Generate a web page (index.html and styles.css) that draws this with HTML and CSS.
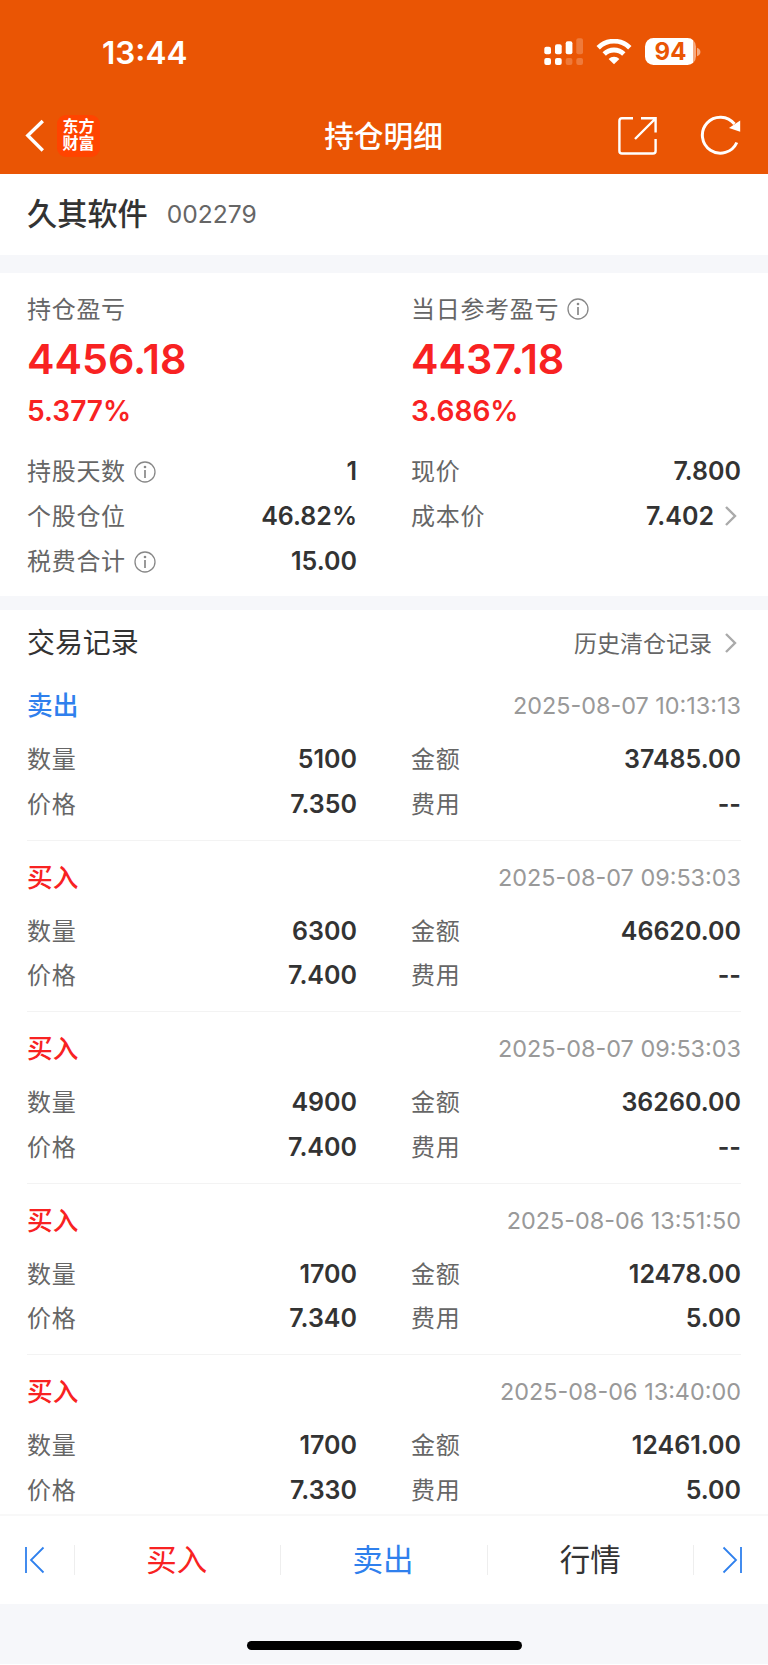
FILE: index.html
```html
<!DOCTYPE html>
<html lang="zh-CN">
<head>
    <meta charset="UTF-8">
    <meta name="viewport" content="width=device-width, initial-scale=1.0">
    <title>持仓明细</title>
    <link rel="stylesheet" href="styles.css">
</head>
<body>
    <header class="header">
        <div class="status-bar">
            <span class="time">13:44</span>
            <div class="status-icons">
                <svg class="signal" width="40" height="28" viewBox="0 0 40 28" fill="#fff">
                    <rect x="0.3" y="8.7" width="6.7" height="7.6" rx="2"/>
                    <rect x="11" y="6.3" width="6.7" height="10" rx="2"/>
                    <rect x="21.7" y="3.3" width="6.7" height="13" rx="2"/>
                    <rect x="32.3" y="0.3" width="6.7" height="16" rx="2" opacity=".22"/>
                    <rect x="0.3" y="20" width="6.7" height="7" rx="2"/>
                    <rect x="11" y="20" width="6.7" height="7" rx="2"/>
                    <rect x="21.7" y="20" width="6.7" height="7" rx="2" opacity=".22"/>
                    <rect x="32.3" y="20" width="6.7" height="7" rx="2" opacity=".22"/>
                </svg>
                <svg class="wifi" width="36" height="26" viewBox="0 0 36 26" fill="none" stroke="#fff" stroke-width="4.8">
                    <path d="M2.2 8.7a22.4 22.4 0 0 1 31.6 0"/>
                    <path d="M8.2 15a14 14 0 0 1 19.6 0"/>
                    <path d="M18 25.3l-5.4-5.3a7.8 7.8 0 0 1 10.8 0z" fill="#fff" stroke="none"/>
                </svg>
                <div class="battery"><span class="battery-level">94</span></div>
                <svg class="battery-cap" width="4" height="10" viewBox="0 0 4 10"><path d="M0 0.8c4.6 1.6 4.6 6.8 0 8.4z" fill="#fff" opacity=".5"/></svg>
            </div>
        </div>
        <nav class="nav-bar">
            <div class="nav-left">
                <svg width="20" height="34" viewBox="0 0 20 34" fill="none" stroke="#fff" stroke-width="3.4"><path d="M17.8 2L2.8 16.5l15 15"/></svg>
                <div class="app-logo"><span>东方</span><span>财富</span></div>
            </div>
            <h1 class="nav-title">持仓明细</h1>
            <div class="nav-right">
                <svg width="40" height="40" viewBox="0 0 40 40" fill="none" stroke="#fff" stroke-width="2.4">
                    <path d="M16 2.3H5a2.6 2.6 0 0 0-2.6 2.6v30A2.6 2.6 0 0 0 5 37.5h31a2.6 2.6 0 0 0 2.6-2.6V23"/>
                    <path d="M24 2.3h14.6v14.2M38 3L18 23"/>
                </svg>
                <svg width="42" height="42" viewBox="0 0 42 42" fill="none" stroke="#fff" stroke-width="3">
                    <path d="M36.8 27.5A18 18 0 1 1 34.5 9"/>
                    <path d="M40.2 5.5v11.3L29 13z" fill="#fff" stroke="none"/>
                </svg>
            </div>
        </nav>
    </header>

    <section class="stock">
        <h2 class="stock-name">久其软件</h2>
        <span class="stock-code">002279</span>
    </section>

    <section class="summary">
        <div class="summary-col">
            <div class="profit-label"><span class="label">持仓盈亏</span></div>
            <div class="profit-value">4456.18</div>
            <div class="profit-rate">5.377%</div>
            <div class="row"><span class="label">持股天数</span><svg class="info" viewBox="0 0 22 22"><use href="#info"/></svg><b class="value">1</b></div>
            <div class="row"><span class="label">个股仓位</span><b class="value">46.82%</b></div>
            <div class="row"><span class="label">税费合计</span><svg class="info" viewBox="0 0 22 22"><use href="#info"/></svg><b class="value">15.00</b></div>
        </div>
        <div class="summary-col">
            <div class="profit-label"><span class="label">当日参考盈亏</span><svg class="info" viewBox="0 0 22 22"><use href="#info"/></svg></div>
            <div class="profit-value">4437.18</div>
            <div class="profit-rate">3.686%</div>
            <div class="row"><span class="label">现价</span><b class="value">7.800</b></div>
            <div class="row"><span class="label">成本价</span><b class="value">7.402</b><svg class="arrow" viewBox="0 0 12 20"><path d="M1 1l9 9-9 9"/></svg></div>
        </div>
    </section>

    <main class="records">
        <div class="records-head">
            <h3 class="records-title">交易记录</h3>
            <a class="history"><span>历史清仓记录</span><svg class="arrow" viewBox="0 0 12 20"><path d="M1 1l9 9-9 9"/></svg></a>
        </div>
        <div id="tradeList"></div>
    </main>

    <footer class="toolbar">
        <div class="tool-side"><svg width="20" height="28" viewBox="0 0 20 28"><path d="M1 1v26M18.5 1.5L6 14l12.5 12.5"/></svg></div>
        <div class="tool buy"><span>买入</span></div>
        <div class="tool sell"><span>卖出</span></div>
        <div class="tool"><span>行情</span></div>
        <div class="tool-side"><svg width="20" height="28" viewBox="0 0 20 28"><path d="M19 1v26M1.5 1.5L14 14 1.5 26.5"/></svg></div>
    </footer>
    <div class="home-area"><div class="home-bar"></div></div>

    <svg width="0" height="0" class="defs">
        <symbol id="info" viewBox="0 0 22 22">
            <circle cx="11" cy="11" r="10" fill="none" stroke="#888" stroke-width="1.3"/>
            <circle cx="11" cy="6" r="1.3" fill="#888"/>
            <path d="M11 9v8" stroke="#888" stroke-width="1.7"/>
        </symbol>
    </svg>

    <script>
        const trades = [
            { type: 'sell', time: '2025-08-07 10:13:13', count: '5100', price: '7.350', amount: '37485.00', fee: '--' },
            { type: 'buy', time: '2025-08-07 09:53:03', count: '6300', price: '7.400', amount: '46620.00', fee: '--' },
            { type: 'buy', time: '2025-08-07 09:53:03', count: '4900', price: '7.400', amount: '36260.00', fee: '--' },
            { type: 'buy', time: '2025-08-06 13:51:50', count: '1700', price: '7.340', amount: '12478.00', fee: '5.00' },
            { type: 'buy', time: '2025-08-06 13:40:00', count: '1700', price: '7.330', amount: '12461.00', fee: '5.00' }
        ];

        function row(label, value) {
            return `<div class="row"><span class="label">${label}</span><b class="value">${value}</b></div>`;
        }

        document.getElementById('tradeList').innerHTML = trades.map(t => `
            <article class="trade">
                <div class="trade-head">
                    <span class="trade-type ${t.type}">${t.type === 'buy' ? '买入' : '卖出'}</span>
                    <span class="trade-time">${t.time}</span>
                </div>
                <div class="trade-grid">
                    ${row('数量', t.count)}${row('金额', t.amount)}
                    ${row('价格', t.price)}${row('费用', t.fee)}
                </div>
            </article>`).join('');
    </script>
</body>
</html>
```

FILE: styles.css
```css
:root {
    --orange: #EA5504;
    --red: #F82222;
    --blue: #2F80ED;
    --text: #333;
    --text-label: #666;
    --text-light: #999;
    --bg-gray: #F6F7FA;
}

* {
    margin: 0;
    padding: 0;
    box-sizing: border-box;
}

body {
    font-family: Inter, 'Noto Sans CJK SC', sans-serif;
    width: 768px;
    height: 1665px;
    display: flex;
    flex-direction: column;
    background: #fff;
    color: var(--text);
    overflow: hidden;
}

.header {
    flex: none;
    height: 174px;
    background: var(--orange);
    color: #fff;
}

.status-bar {
    display: flex;
    justify-content: space-between;
    height: 98px;
    padding: 0 67px 0 102px;
}

.time {
    font-size: 31.5px;
    font-weight: 600;
    line-height: 105px;
}

.status-icons {
    display: flex;
    align-items: center;
    height: 103px;
}

.wifi {
    margin-left: 12px;
}

.battery {
    width: 51px;
    height: 27px;
    margin-left: 13px;
    border-radius: 8.5px;
    background: linear-gradient(90deg, #fff 48px, rgba(255, 255, 255, .5) 48px);
}

.battery-level {
    display: block;
    width: 51px;
    font-size: 24px;
    font-weight: 700;
    line-height: 28px;
    text-align: center;
    color: var(--orange);
}

.battery-cap {
    margin-left: 1px;
}

.nav-bar {
    display: grid;
    grid-template-columns: 1fr auto 1fr;
    align-items: center;
    height: 76px;
    padding: 0 26px 0 25px;
}

.nav-left, .nav-right {
    display: flex;
    align-items: center;
}

.nav-left {
    gap: 12px;
}

.nav-right {
    justify-content: flex-end;
    gap: 43px;
}

.app-logo {
    display: flex;
    flex-direction: column;
    justify-content: center;
    width: 43px;
    height: 42px;
    padding-bottom: 2px;
    border-radius: 9px;
    background: #FF4400;
    font-size: 16px;
    font-weight: 700;
    line-height: 17.5px;
    text-align: center;
}

.nav-title {
    padding-bottom: 4px;
    font-size: 29.7px;
    font-weight: 500;
}

.stock {
    flex: none;
    display: flex;
    align-items: center;
    height: 81px;
    padding: 0 27px 4px;
}

.stock-name {
    padding-bottom: 2px;
    font-size: 30.2px;
    font-weight: 500;
}

.stock-code {
    margin-left: 19px;
    padding-top: 2px;
    font-size: 24.6px;
    color: var(--text-label);
}

.summary {
    flex: none;
    display: grid;
    grid-template-columns: 1fr 1fr;
    column-gap: 54px;
    height: 355px;
    padding: 18px 27px 0;
    border-top: 18px solid var(--bg-gray);
    border-bottom: 14px solid var(--bg-gray);
}

.profit-label {
    display: flex;
    align-items: center;
    height: 36px;
}

.profit-value {
    font-size: 41.3px;
    font-weight: 600;
    line-height: 64px;
    color: var(--red);
}

.profit-rate {
    margin-bottom: 18px;
    font-size: 28.1px;
    font-weight: 600;
    line-height: 40px;
    color: var(--red);
}

.row {
    display: flex;
    align-items: center;
    height: 44.7px;
}

.label {
    padding-bottom: 3px;
    font-size: 24px;
    letter-spacing: .7px;
    color: var(--text-label);
}

.value {
    margin-left: auto;
    font-size: 25px;
    font-weight: 600;
}

.info {
    width: 22px;
    height: 22px;
    margin-left: 8px;
}

.row .info {
    margin-top: 2px;
}

.arrow {
    width: 12px;
    height: 20px;
    margin: 0 4px 0 11px;
    fill: none;
    stroke: #aaa;
    stroke-width: 2.4;
}

.records {
    flex: none;
    height: 904px;
    padding: 0 27px;
    overflow: hidden;
}

.records-head {
    display: flex;
    justify-content: space-between;
    align-items: center;
    height: 59px;
    padding-top: 7px;
}

.records-title {
    padding-bottom: 4px;
    font-size: 27.9px;
    font-weight: 400;
}

.history {
    display: flex;
    align-items: center;
    font-size: 23px;
    color: var(--text-label);
}

.history span {
    padding: 0 2px 3px 0;
}

.trade {
    height: 171.5px;
    padding-top: 8px;
    border-bottom: 1px solid #f3f3f3;
}

.trade-head {
    display: flex;
    justify-content: space-between;
    align-items: center;
    height: 57px;
    margin-bottom: 2.7px;
}

.trade-type {
    padding-bottom: 4px;
    font-size: 25.7px;
    font-weight: 500;
}

.trade-time {
    font-size: 23.4px;
    color: var(--text-light);
}

.trade-grid {
    display: grid;
    grid-template-columns: 1fr 1fr;
    column-gap: 54px;
}

.toolbar {
    flex: none;
    display: flex;
    align-items: center;
    height: 90px;
    border-top: 2px solid #f8f8f8;
}

.tool, .tool-side {
    display: flex;
    align-items: center;
    justify-content: center;
    height: 30px;
}

.tool {
    flex: 1;
    font-size: 30.5px;
    border-right: 1px solid #eee;
}

.tool span {
    padding: 0 2px 5px 0;
}

.tool:nth-child(4) span {
    padding-right: 0;
}

.tool-side {
    width: 74px;
    padding-left: 2px;
}

.tool-side:first-child {
    width: 75px;
    padding: 0 5px 0 0;
    border-right: 1px solid #eee;
}

.tool-side svg {
    fill: none;
    stroke: var(--blue);
    stroke-width: 1.8;
}

.buy {
    color: var(--red);
}

.sell {
    color: var(--blue);
}

.home-area {
    flex: none;
    display: flex;
    justify-content: center;
    height: 60px;
    padding-top: 37px;
    background: var(--bg-gray);
}

.home-bar {
    width: 275px;
    height: 9px;
    border-radius: 5px;
    background: #000;
}

.defs {
    position: absolute;
}
```
